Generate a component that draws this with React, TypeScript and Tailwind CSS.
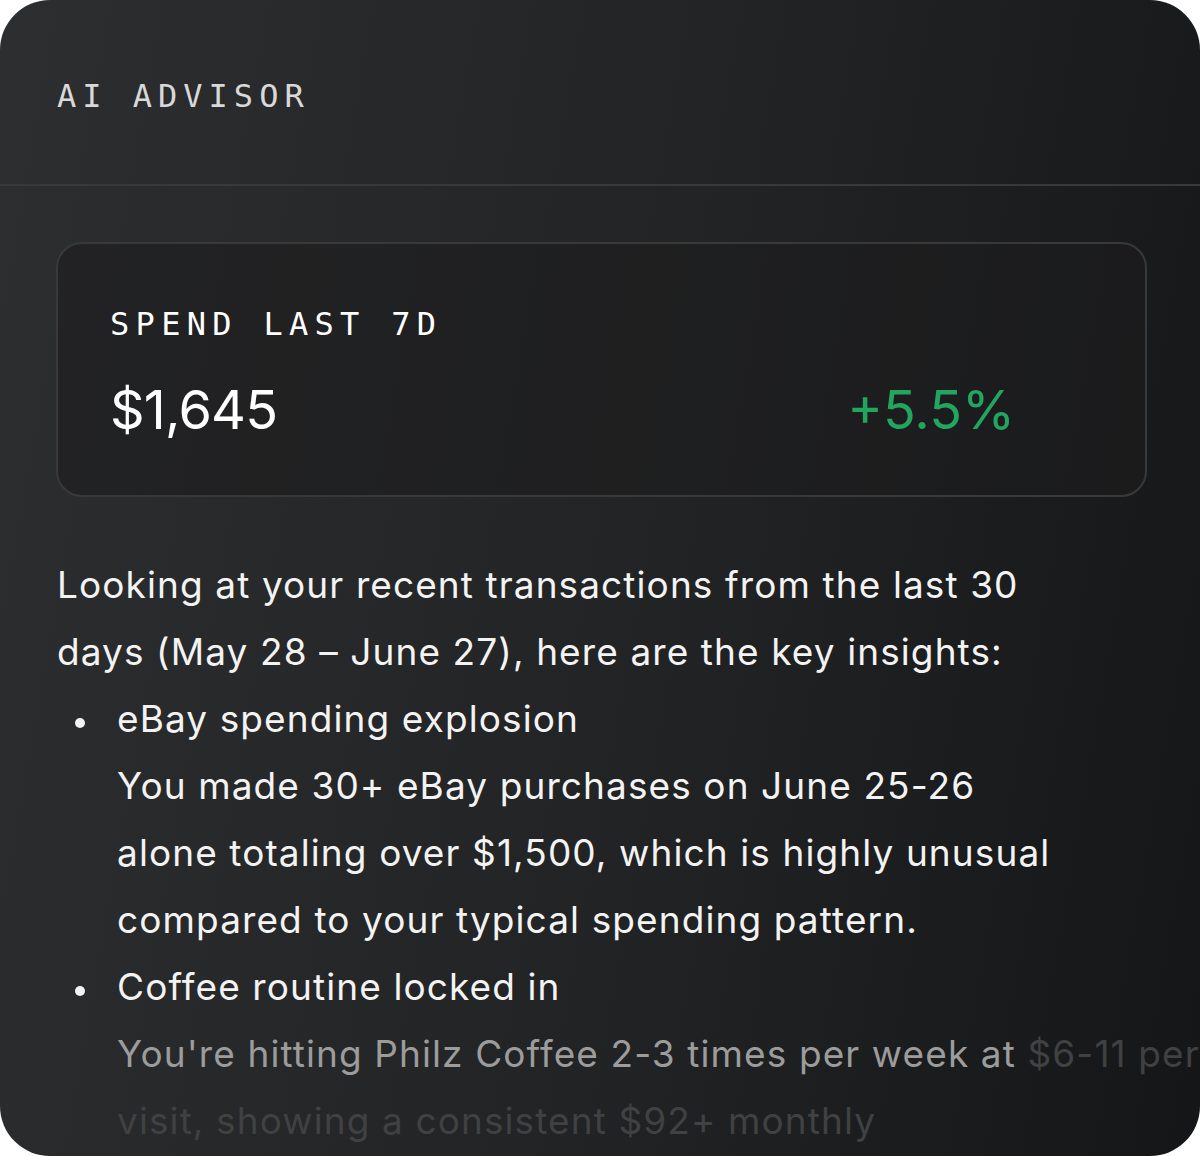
import React from 'react';

const mono = "font-['DejaVu_Sans_Mono','Liberation_Mono',monospace]";
const sans = "font-['Inter','Noto_Sans',sans-serif]";

function Line({ children }: { children: React.ReactNode }) {
  return <span className="block whitespace-nowrap">{children}</span>;
}

function Bullet({ children }: { children: React.ReactNode }) {
  return (
    <li className="relative">
      <span className="absolute left-[-42px] top-[33px] h-[10px] w-[10px] rounded-full bg-[#f3f3f3]" />
      {children}
    </li>
  );
}

export default function App() {
  return (
    <div className="w-[1200px] h-[1156px] bg-white">
      <div className="w-full h-full rounded-[50px] overflow-hidden bg-[linear-gradient(100deg,#2d2e2f_0%,#222324_55%,#151617_100%)]">
        <div className="px-[57px] pt-[76px] pb-[68px] border-b-2 border-[#38393b]">
          <h1 className={`${mono} text-[32px] leading-[40px] tracking-[6px] text-[#d9d9d9]`}>
            AI ADVISOR
          </h1>
        </div>

        <div className="pl-[56px] pr-[53px] pt-[56px]">
          <div className="rounded-[26px] border-2 border-[#38393b] bg-[#1c1d1e]/60 pl-[52px] pr-[130px] pt-[60px] pb-[58px]">
            <p className={`${mono} text-[32px] leading-[40px] tracking-[6.3px] text-white`}>
              SPEND LAST 7D
            </p>
            <div className={`${sans} mt-[39px] flex items-center justify-between text-[54px] leading-none`}>
              <span className="text-white tracking-[-0.8px]">$1,645</span>
              <span className="text-[#22a55f]">+5.5%</span>
            </div>
          </div>

          <div className={`${sans} mt-[54px] pl-px text-[37px] leading-[67px] tracking-[1.1px] text-[#f3f3f3]`}>
            <p>
              <Line>Looking at your recent transactions from the last 30</Line>
              <Line>days (May 28 – June 27), here are the key insights:</Line>
            </p>
            <ul className="list-none pl-[60px]">
              <Bullet>
                <Line>eBay spending explosion</Line>
                <Line>You made 30+ eBay purchases on June 25-26</Line>
                <Line>alone totaling over $1,500, which is highly unusual</Line>
                <Line>compared to your typical spending pattern.</Line>
              </Bullet>
              <Bullet>
                <Line>Coffee routine locked in</Line>
                <Line>
                  <span className="text-[#9c9c9c]">You're hitting Philz Coffee 2-3 times per week at </span>
                  <span className="text-[#404142]">$6-11 per</span>
                </Line>
                <Line>
                  <span className="text-[#404142]">visit, showing a consistent $92+ monthly</span>
                </Line>
              </Bullet>
            </ul>
          </div>
        </div>
      </div>
    </div>
  );
}
